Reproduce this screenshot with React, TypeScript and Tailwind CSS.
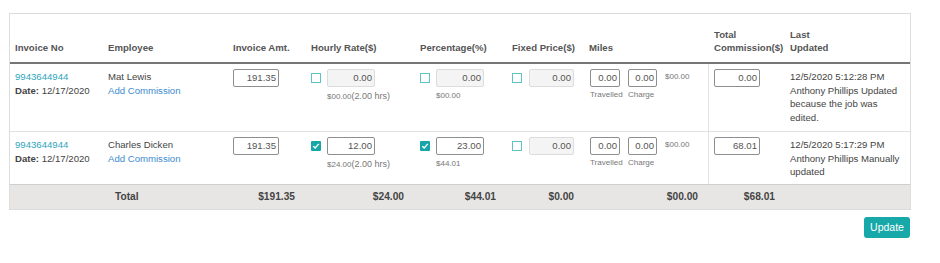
const cols =
  "grid grid-cols-[92px_125px_78px_109px_92px_77px_125px_76px_1fr]";

type Row = {
  invoice: string;
  date: string;
  employee: string;
  amount: string;
  hourly: { on: boolean; value: string; sub: string };
  pct: { on: boolean; value: string; sub: string };
  fixed: { on: boolean; value: string };
  travelled: string;
  charge: string;
  milesAmt: string;
  total: string;
  updated: string[];
  height: string;
  border: boolean;
};

const rows: Row[] = [
  {
    invoice: "9943644944",
    date: "12/17/2020",
    employee: "Mat Lewis",
    amount: "191.35",
    hourly: { on: false, value: "0.00", sub: "$00.00" },
    pct: { on: false, value: "0.00", sub: "$00.00" },
    fixed: { on: false, value: "0.00" },
    travelled: "0.00",
    charge: "0.00",
    milesAmt: "$00.00",
    total: "0.00",
    updated: [
      "12/5/2020 5:12:28 PM",
      "Anthony Phillips Updated",
      "because the job was",
      "edited.",
    ],
    height: "h-[68px]",
    border: true,
  },
  {
    invoice: "9943644944",
    date: "12/17/2020",
    employee: "Charles Dicken",
    amount: "191.35",
    hourly: { on: true, value: "12.00", sub: "$24.00" },
    pct: { on: true, value: "23.00", sub: "$44.01" },
    fixed: { on: false, value: "0.00" },
    travelled: "0.00",
    charge: "0.00",
    milesAmt: "$00.00",
    total: "68.01",
    updated: ["12/5/2020 5:17:29 PM", "Anthony Phillips Manually", "updated"],
    height: "h-[52px]",
    border: false,
  },
];

const Check = ({ on }: { on: boolean }) =>
  on ? (
    <span className="flex h-[10px] w-[10px] shrink-0 items-center justify-center rounded-[1px] bg-[#17a5a8]">
      <svg width="8" height="8" viewBox="0 0 8 8">
        <path d="M1.3 4.2 L3.2 6 L6.8 1.9" fill="none" stroke="white" strokeWidth="1.4" />
      </svg>
    </span>
  ) : (
    <span className="h-[10px] w-[10px] shrink-0 border border-[#5ec3c6] bg-white" />
  );

const Input = ({
  value,
  width,
  disabled,
}: {
  value: string;
  width: string;
  disabled?: boolean;
}) => (
  <div
    className={`flex h-[18px] ${width} items-center justify-end rounded-[2px] border pr-[2px] text-[9.6px] text-[#555] ${
      disabled ? "border-[#dcdcdc] bg-[#f4f4f4]" : "border-[#8e8e8e] bg-white"
    }`}
  >
    {value}
  </div>
);

const App = () => {
  return (
    <div className="min-h-[263px] w-[940px] bg-white pt-[13px] pl-[9px] font-['Liberation_Sans',Arial,sans-serif] text-[9.6px] leading-[13.7px] text-[#444]">
      <div className="w-[902px] border border-[#dcdcdc]">
        {/* header */}
        <div
          className={`${cols} h-[50px] items-end border-b-2 border-[#767676] pb-[7px] font-bold text-[#555]`}
        >
          <div className="pl-[5px]">Invoice No</div>
          <div className="pl-[6px]">Employee</div>
          <div className="pl-[6px]">Invoice Amt.</div>
          <div className="pl-[6px]">Hourly Rate($)</div>
          <div className="pl-[6px]">Percentage(%)</div>
          <div className="pl-[6px]">Fixed Price($)</div>
          <div className="pl-[6px]">Miles</div>
          <div className="pl-[6px]">
            Total
            <br />
            Commission($)
          </div>
          <div className="pl-[6px]">
            Last
            <br />
            Updated
          </div>
        </div>

        {rows.map((r, i) => (
          <div
            key={i}
            className={`${cols} ${r.height} ${r.border ? "border-b border-[#e2e2e2]" : ""}`}
          >
            <div className="pl-[5px] pt-[6px]">
              <div className="text-[#2ea5bd]">{r.invoice}</div>
              <div>
                <span className="font-bold">Date:</span> {r.date}
              </div>
            </div>
            <div className="pl-[6px] pt-[6px]">
              <div>{r.employee}</div>
              <div className="text-[#3d8bd0]">Add Commission</div>
            </div>
            <div className="pl-[6px] pt-[5px]">
              <Input value={r.amount} width="w-[46px]" />
            </div>
            <div className="pl-[6px] pt-[5px]">
              <div className="flex items-center gap-[6px]">
                <Check on={r.hourly.on} />
                <Input value={r.hourly.value} width="w-[48px]" disabled={!r.hourly.on} />
              </div>
              <div className="mt-[3px] pl-[16px] leading-[11px] text-[#777]">
                <span className="text-[8px]">{r.hourly.sub}</span>
                <span className="text-[9px]">(2.00 hrs)</span>
              </div>
            </div>
            <div className="pl-[6px] pt-[5px]">
              <div className="flex items-center gap-[6px]">
                <Check on={r.pct.on} />
                <Input value={r.pct.value} width="w-[48px]" disabled={!r.pct.on} />
              </div>
              <div className="mt-[3px] pl-[16px] text-[8px] leading-[11px] text-[#777]">
                {r.pct.sub}
              </div>
            </div>
            <div className="pl-[6px] pt-[5px]">
              <div className="flex items-center gap-[7px]">
                <Check on={r.fixed.on} />
                <Input value={r.fixed.value} width="w-[45px]" disabled={!r.fixed.on} />
              </div>
            </div>
            <div className="flex gap-[8px] pl-[7px] pt-[5px]">
              <div className="w-[30px]">
                <Input value={r.travelled} width="w-[30px]" />
                <div className="mt-[2px] whitespace-nowrap text-[8px] leading-[11px] text-[#777]">
                  Travelled
                </div>
              </div>
              <div className="w-[29px]">
                <Input value={r.charge} width="w-[29px]" />
                <div className="mt-[2px] whitespace-nowrap text-[8px] leading-[11px] text-[#777]">
                  Charge
                </div>
              </div>
              <div className="pt-[2px] text-[8px] leading-[11px] text-[#777]">{r.milesAmt}</div>
            </div>
            <div className="border-l border-[#e2e2e2] pl-[5px] pt-[5px]">
              <Input value={r.total} width="w-[46px]" />
            </div>
            <div className="pl-[6px] pt-[6px]">
              {r.updated.map((l) => (
                <div key={l}>{l}</div>
              ))}
            </div>
          </div>
        ))}

        {/* totals */}
        <div
          className={`${cols} h-[25px] items-center border-t border-[#cfcfcf] bg-[#e8e6e5] text-[10.2px] font-bold text-[#444]`}
        >
          <div />
          <div className="pl-[13px]">Total</div>
          <div className="pr-[10px] text-right">$191.35</div>
          <div className="pr-[10px] text-right">$24.00</div>
          <div className="pr-[10px] text-right">$44.01</div>
          <div className="pr-[9px] text-right">$0.00</div>
          <div className="pr-[10px] text-right">$00.00</div>
          <div className="pr-[9px] text-right">$68.01</div>
          <div />
        </div>
      </div>
      <div className="flex w-[901px] justify-end pt-[7px]">
        <button className="h-[21px] w-[46px] rounded-[3px] bg-[#17a8a9] text-[10.5px] text-white">
          Update
        </button>
      </div>
    </div>
  );
};

export default App;
